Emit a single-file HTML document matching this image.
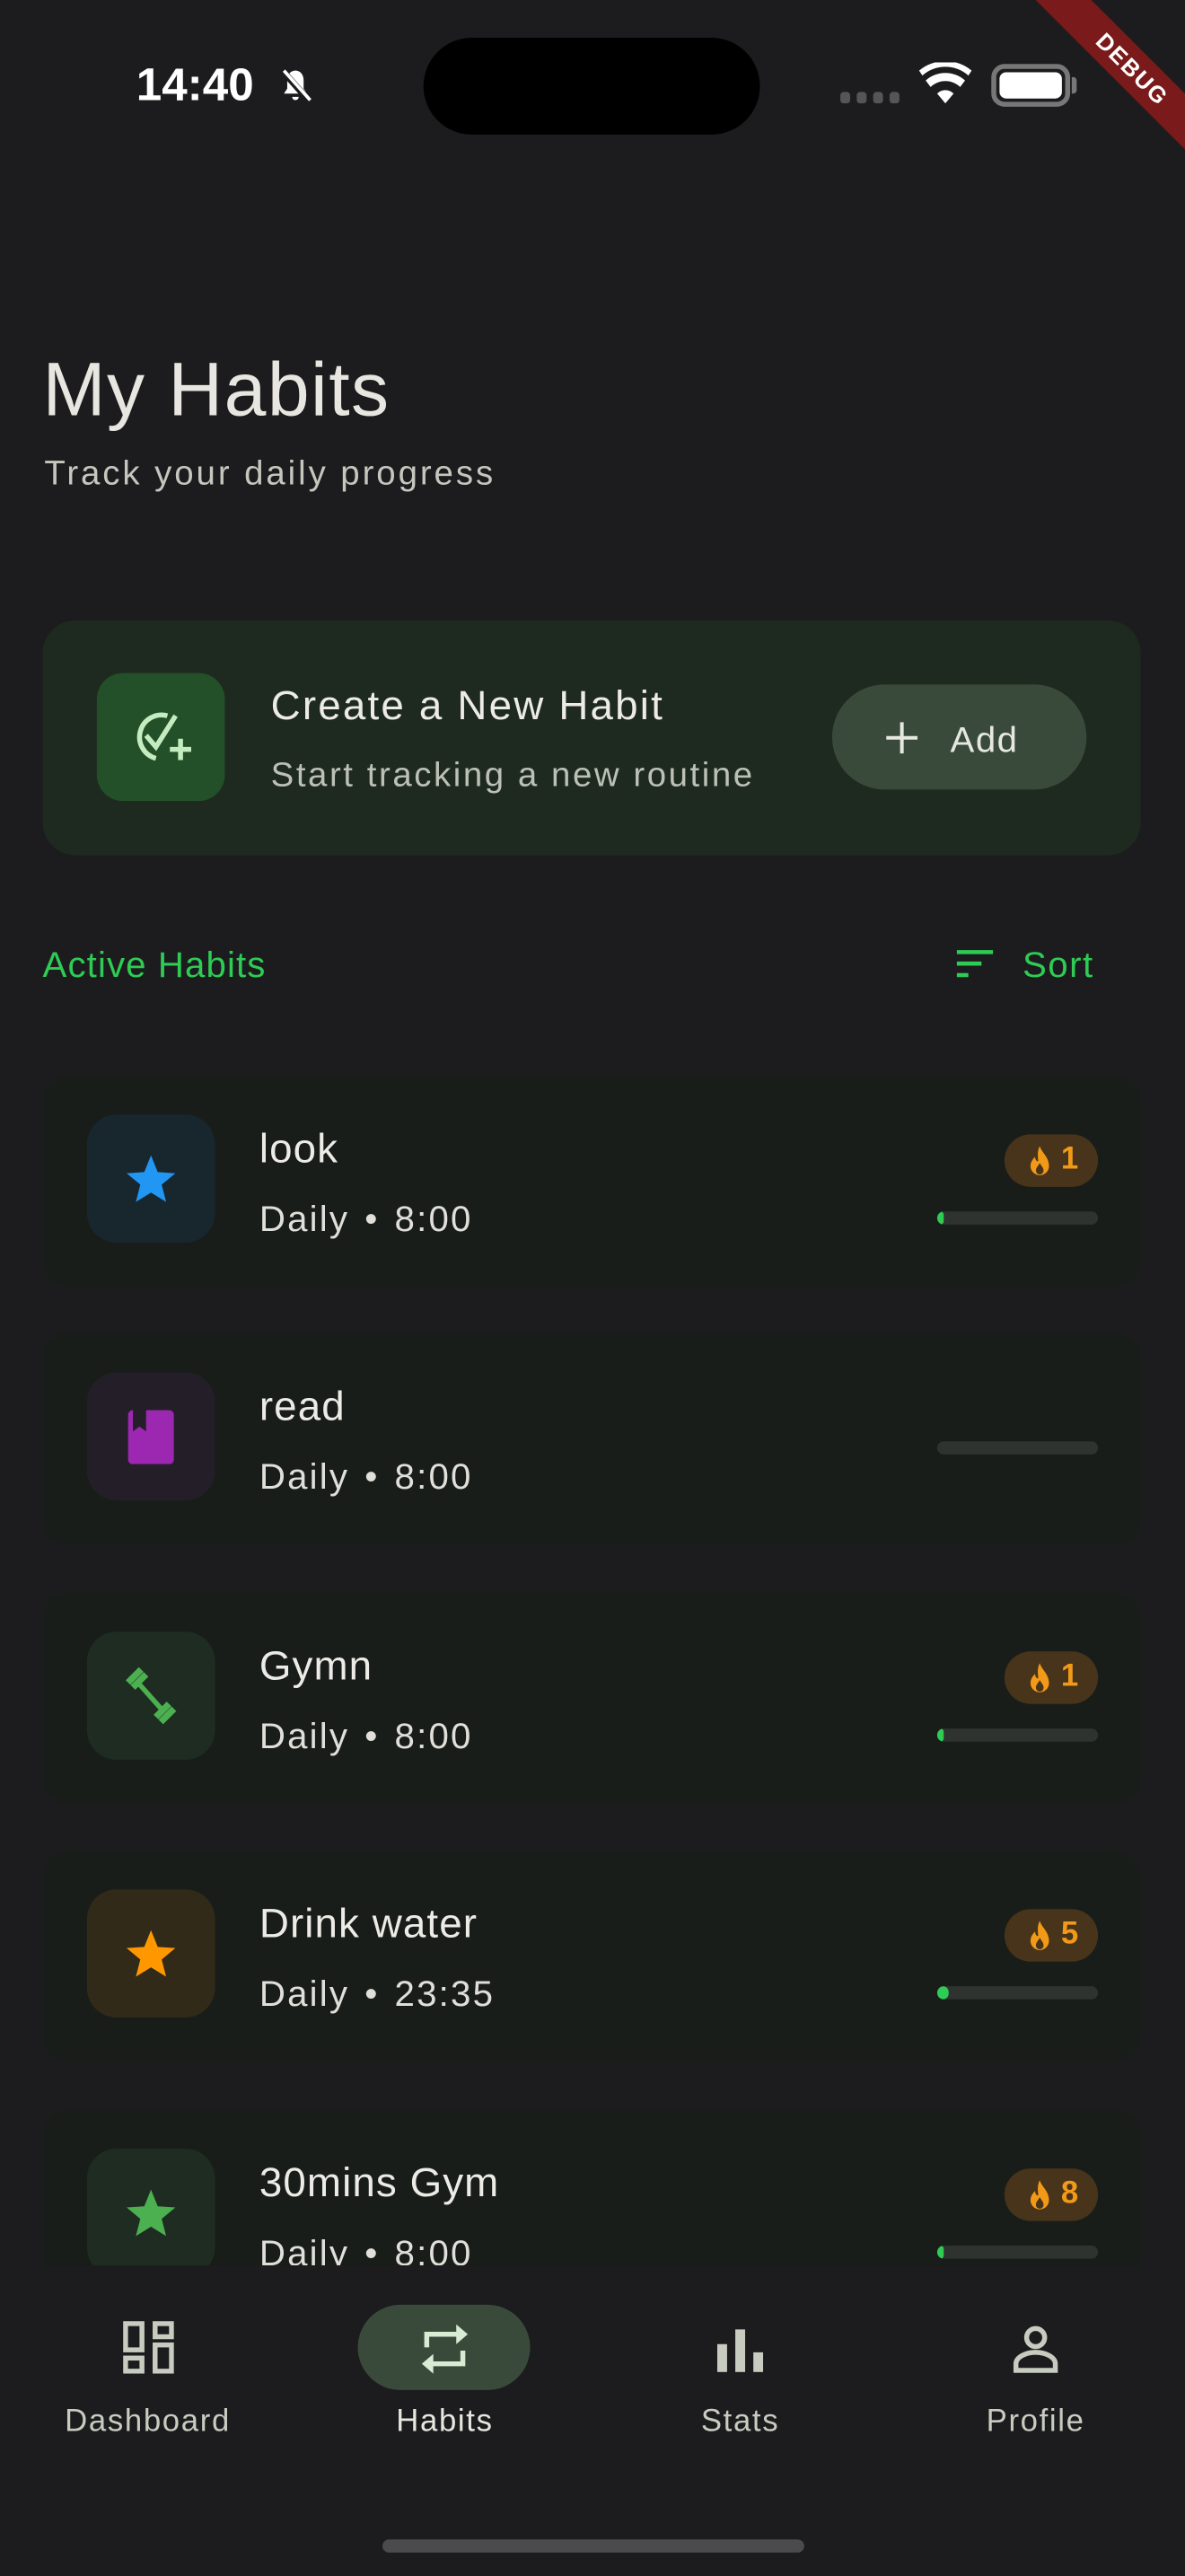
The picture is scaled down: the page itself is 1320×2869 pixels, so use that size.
<!DOCTYPE html>
<html><head><meta charset="utf-8"><style>
*{margin:0;padding:0;box-sizing:border-box}
html,body{width:1320px;height:2868px;overflow:hidden;background:#1c1c1e}
#w{position:absolute;left:0;top:0;width:722px;height:1569px;transform:scale(1.82825);transform-origin:0 0;font-family:"Liberation Sans",sans-serif;color:#e8e6e0;overflow:hidden;background:#1c1c1e}
.a{position:absolute}
.card{position:absolute;left:26px;width:669px;height:129px;background:#191d19;border-radius:16px}
.ib{position:absolute;left:27px;top:24px;width:78px;height:78px;border-radius:18px;display:flex;align-items:center;justify-content:center}
.nm{position:absolute;left:132px;top:31px;font-size:25px;color:#ecebe6;letter-spacing:.6px}
.sb{position:absolute;left:132px;top:75px;font-size:22px;color:#e0dfda;letter-spacing:1.2px;word-spacing:2px}
.bd{position:absolute;right:26px;top:36px;height:32px;border-radius:16px;background:#47341a;color:#f29a18;font-weight:bold;font-size:19px;display:flex;align-items:center;padding:0 12px 0 14px;gap:5px}
.pb{position:absolute;left:545px;top:83px;width:98px;height:8px;border-radius:4px;background:#2f332f;overflow:hidden}
.pb i{position:absolute;left:0;top:0;height:8px;width:4px;background:#2ecc55;border-radius:4px}
.nl{position:absolute;top:1465px;font-size:19px;color:#c8ccc0;text-align:center;width:160px;letter-spacing:.9px}
</style></head><body><div id="w">
<div class="a" style="left:83px;top:36px;font-size:28px;font-weight:bold;color:#fff">14:40</div>
<svg class="a" style="left:168px;top:40px" width="24" height="24" viewBox="0 0 24 24"><path d="M12 3c-3 0-5 2.5-5 6v5l-2 3h14l-2-3V9c0-3.5-2-6-5-6zM10 19a2 2 0 004 0z" fill="#fff"/><path d="M4 3l16 18" stroke="#1c1c1e" stroke-width="4"/><path d="M5 3l16 18" stroke="#fff" stroke-width="2"/></svg>
<div class="a" style="left:258px;top:23px;width:205px;height:59px;background:#000;border-radius:30px"></div>
<div class="a" style="left:512px;top:56px;display:flex;gap:4px"><i style="width:6px;height:7px;background:#555;border-radius:2px"></i><i style="width:6px;height:7px;background:#555;border-radius:2px"></i><i style="width:6px;height:7px;background:#555;border-radius:2px"></i><i style="width:6px;height:7px;background:#555;border-radius:2px"></i></div>
<svg class="a" style="left:560px;top:38px" width="32" height="26" viewBox="0 0 32 26"><path d="M16 25l-5-6a7 7 0 0110 0zM7 15a13 13 0 0118 0l3-4a18 18 0 00-24 0zM2 8a21 21 0 0128 0l2-3a25 25 0 00-32 0z" fill="#fff"/></svg>
<div class="a" style="left:604px;top:39px;width:48px;height:26px;border:3px solid #777;border-radius:8px;padding:2px"><div style="width:100%;height:100%;background:#fff;border-radius:4px"></div></div>
<div class="a" style="left:653px;top:47px;width:3px;height:10px;background:#777;border-radius:0 2px 2px 0"></div>
<div class="a" style="left:615px;top:30px;width:150px;height:24px;background:#7a1a1a;transform:rotate(45deg);color:#fff;font-size:14px;font-weight:bold;text-align:center;line-height:24px;letter-spacing:1px">DEBUG</div>

<div class="a" style="left:26px;top:210px;font-size:46px;color:#e8e6e0;letter-spacing:.8px">My Habits</div>
<div class="a" style="left:27px;top:277px;font-size:21px;color:#c6c6be;letter-spacing:1.6px">Track your daily progress</div>

<div class="a" style="left:26px;top:378px;width:669px;height:143px;background:#1e2a20;border-radius:20px"></div>
<div class="a" style="left:59px;top:410px;width:78px;height:78px;background:#235028;border-radius:16px"></div>
<svg class="a" style="left:78px;top:430px" width="42" height="40" viewBox="0 0 42 40"><path d="M24 6A13 13 0 1017 32" fill="none" stroke="#c4ecc0" stroke-width="3"/><path d="M11 18l6 7 12-19" fill="none" stroke="#c4ecc0" stroke-width="3"/><path d="M32 20v13M25.5 26.5h13" stroke="#c4ecc0" stroke-width="3"/></svg>
<div class="a" style="left:165px;top:416px;font-size:25px;color:#ecebe6;letter-spacing:1.2px">Create a New Habit</div>
<div class="a" style="left:165px;top:461px;font-size:21px;color:#bcc0b6;letter-spacing:1.4px">Start tracking a new routine</div>
<div class="a" style="left:507px;top:417px;width:155px;height:64px;background:#3a4a3a;border-radius:32px"></div>
<svg class="a" style="left:539px;top:439px" width="21" height="21" viewBox="0 0 21 21"><path d="M10.5 1v19M1 10.5h19" stroke="#e6e8e0" stroke-width="2.2"/></svg>
<div class="a" style="left:579px;top:438px;font-size:22px;color:#e6e8e0;letter-spacing:.8px">Add</div>

<div class="a" style="left:26px;top:575px;font-size:22px;color:#2ecc55;letter-spacing:.6px">Active Habits</div>
<svg class="a" style="left:582px;top:578px" width="24" height="18" viewBox="0 0 24 18"><path d="M1 2h22M1 9h15M1 16h7" stroke="#2ecc55" stroke-width="2.5"/></svg>
<div class="a" style="left:623px;top:575px;font-size:22px;color:#2ecc55;letter-spacing:.8px">Sort</div>

<svg width="0" height="0" style="position:absolute"><defs><symbol id="fl" viewBox="0 0 16 20"><path d="M8 0C9 4 14 7 14 13a6 6 0 01-12 0c0-3 2-5 3-6 0 2 1 3 2 3C7 7 6 4 8 0zM8 11c-1 2-2.5 3-2.5 5a2.5 2.5 0 005 0c0-2-1.5-3-2.5-5z" fill="#f29a18" fill-rule="evenodd"/></symbol></defs></svg>

<div class="card" style="top:655px"><div class="ib" style="background:#18262e"><svg width="34" height="34" viewBox="0 0 24 24"><path d="M12 2l2.9 7.2 7.6.5-5.9 4.9 1.9 7.4L12 18l-6.5 4 1.9-7.4L1.5 9.7l7.6-.5z" fill="#2196f3"/></svg></div><div class="nm">look</div><div class="sb">Daily • 8:00</div><div class="bd"><svg width="15" height="19"><use href="#fl"/></svg>1</div><div class="pb"><i></i></div></div>

<div class="card" style="top:812px"><div class="ib" style="background:#231e27"><svg width="28" height="34" viewBox="0 0 28 34"><rect x="0" y="1" width="28" height="33" rx="3" fill="#9c27b0"/><path d="M3 1h8v13l-4-3-4 3z" fill="#231e27"/></svg></div><div class="nm">read</div><div class="sb">Daily • 8:00</div><div class="pb" style="top:66px"></div></div>

<div class="card" style="top:970px"><div class="ib" style="background:#1f2c21"><svg width="36" height="36" viewBox="0 0 36 36"><path d="M10 10l16 18" stroke="#4caf50" stroke-width="3"/><path d="M4 10l8-8M7 13l8-8M21 31l8-8M24 34l8-8" stroke="#4caf50" stroke-width="4"/></svg></div><div class="nm">Gymn</div><div class="sb">Daily • 8:00</div><div class="bd"><svg width="15" height="19"><use href="#fl"/></svg>1</div><div class="pb"><i></i></div></div>

<div class="card" style="top:1127px"><div class="ib" style="background:#322a19"><svg width="34" height="34" viewBox="0 0 24 24"><path d="M12 2l2.9 7.2 7.6.5-5.9 4.9 1.9 7.4L12 18l-6.5 4 1.9-7.4L1.5 9.7l7.6-.5z" fill="#ff9800"/></svg></div><div class="nm">Drink water</div><div class="sb">Daily • 23:35</div><div class="bd"><svg width="15" height="19"><use href="#fl"/></svg>5</div><div class="pb"><i style="width:7px"></i></div></div>

<div class="card" style="top:1285px"><div class="ib" style="background:#1f2c21"><svg width="34" height="34" viewBox="0 0 24 24"><path d="M12 2l2.9 7.2 7.6.5-5.9 4.9 1.9 7.4L12 18l-6.5 4 1.9-7.4L1.5 9.7l7.6-.5z" fill="#4caf50"/></svg></div><div class="nm">30mins Gym</div><div class="sb">Daily • 8:00</div><div class="bd"><svg width="15" height="19"><use href="#fl"/></svg>8</div><div class="pb"><i></i></div></div>

<div class="a" style="left:0;top:1380px;width:722px;height:189px;background:#1c1c1e"></div>
<svg class="a" style="left:75px;top:1414px" width="31" height="32" viewBox="0 0 31 32"><g fill="none" stroke="#c8ccc0" stroke-width="3"><rect x="1.5" y="1.5" width="10" height="16"/><rect x="19.5" y="1.5" width="10" height="8"/><rect x="1.5" y="22.5" width="10" height="8"/><rect x="19.5" y="14.5" width="10" height="16"/></g></svg>
<div class="nl" style="left:10px">Dashboard</div>
<div class="a" style="left:218px;top:1404px;width:105px;height:52px;background:#3a4a3a;border-radius:26px"></div>
<svg class="a" style="left:254px;top:1414px" width="34" height="34" viewBox="0 0 34 34"><g fill="none" stroke="#d8ecd4" stroke-width="3"><path d="M6 16V8h20"/><path d="M28 18v8H8"/></g><path d="M24 2l7 6-7 6zM10 20l-7 6 7 6z" fill="#d8ecd4"/></svg>
<div class="nl" style="left:191px;color:#e6e8e0">Habits</div>
<svg class="a" style="left:437px;top:1419px" width="28" height="26" viewBox="0 0 28 26"><path d="M0 9h6v17H0zM11 0h6v26h-6zM22 14h6v12h-6z" fill="#c8ccc0"/></svg>
<div class="nl" style="left:371px">Stats</div>
<svg class="a" style="left:616px;top:1416px" width="30" height="30" viewBox="0 0 30 30"><circle cx="15" cy="8" r="5.5" fill="none" stroke="#c8ccc0" stroke-width="3"/><path d="M3 28v-4c0-4 6-7 12-7s12 3 12 7v4z" fill="none" stroke="#c8ccc0" stroke-width="3"/></svg>
<div class="nl" style="left:551px">Profile</div>
<div class="a" style="left:233px;top:1547px;width:257px;height:8px;background:#4b4b4d;border-radius:4px"></div>
</div></body></html>
